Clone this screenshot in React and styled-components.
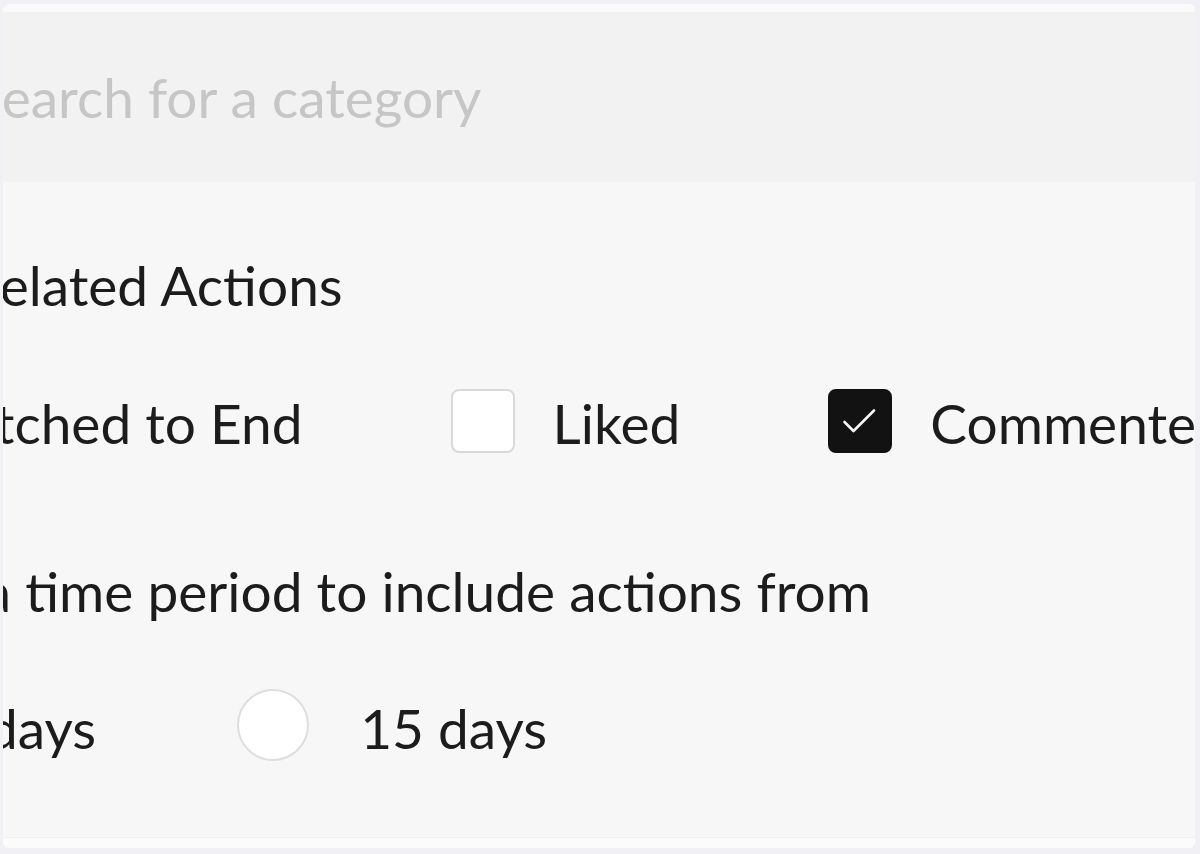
import React, { useState } from "react";
import styled, { createGlobalStyle } from "styled-components";

const GlobalStyle = createGlobalStyle`
  html, body {
    margin: 0;
    padding: 0;
    background: #f1f0f5;
    font-family: Lato, "Liberation Sans", sans-serif;
  }
`;

const App = () => {
    const [actions, setActions] = useState({ watched: false, liked: false, commented: true });
    const [period, setPeriod] = useState(null);

    const toggle = (key) => setActions((prev) => ({ ...prev, [key]: !prev[key] }));

    return (
        <>
            <GlobalStyle />
            <Frame>
                <Card>
                    <TopStrip />
                    <SearchBar>
                        <SearchInput placeholder="Search for a category" />
                    </SearchBar>
                    <Body>
                        <Heading>Related Actions</Heading>
                        <OptionRow shift={-191} gap={148}>
                            <Option>
                                <CheckBox checked={actions.watched} onClick={() => toggle("watched")}>
                                    {actions.watched && <CheckMark />}
                                </CheckBox>
                                <Label>Watched to End</Label>
                            </Option>
                            <Option>
                                <CheckBox checked={actions.liked} onClick={() => toggle("liked")}>
                                    {actions.liked && <CheckMark />}
                                </CheckBox>
                                <Label>Liked</Label>
                            </Option>
                            <Option>
                                <CheckBox checked={actions.commented} onClick={() => toggle("commented")}>
                                    {actions.commented && <CheckMark />}
                                </CheckBox>
                                <Label>Commented</Label>
                            </Option>
                        </OptionRow>
                        <Question>Select a time period to include actions from</Question>
                        <OptionRow shift={-185} gap={141} radio>
                            <Option radio>
                                <Radio selected={period === "7"} onClick={() => setPeriod("7")} />
                                <Label>7 days</Label>
                            </Option>
                            <Option radio>
                                <Radio selected={period === "15"} onClick={() => setPeriod("15")} />
                                <Label>15 days</Label>
                            </Option>
                        </OptionRow>
                    </Body>
                    <BottomStrip />
                </Card>
            </Frame>
        </>
    );
};

const CheckMark = () => (
    <svg width="40" height="40" viewBox="0 0 40 40" fill="none">
        <path d="M4.5 21 L13.5 30 L34 9.5" stroke="#f4f4f4" strokeWidth="2.6" strokeLinecap="round" strokeLinejoin="round" />
    </svg>
);

export default App;

const Frame = styled.div`
  height: 854px;
  box-sizing: border-box;
  padding: 4px 5px 6px 3px;
  overflow: hidden;
`;

const Card = styled.div`
  height: 100%;
  display: flex;
  flex-direction: column;
  background: #f7f7f7;
  border-radius: 6px;
  overflow: hidden;
`;

const TopStrip = styled.div`
  height: 8px;
  background: #fafafa;
`;

const SearchBar = styled.div`
  height: 170px;
  display: flex;
  align-items: center;
  background: #f2f2f2;
`;

const SearchInput = styled.input`
  margin-left: -31px;
  padding: 0;
  border: none;
  outline: none;
  background: transparent;
  font-family: Lato, "Liberation Sans", sans-serif;
  font-size: 55px;
  width: 900px;
  color: #1c1c1c;
  &::placeholder {
    color: #c6c6c6;
  }
`;

const Body = styled.div`
  flex: 1;
  display: flex;
  flex-direction: column;
  padding-top: 73px;
  color: #1c1c1c;
  font-size: 55px;
  line-height: 60px;
`;

const Heading = styled.div`
  margin-left: -36px;
  white-space: nowrap;
`;

const Question = styled.div`
  margin-left: -180px;
  margin-top: 108px;
  white-space: nowrap;
`;

const OptionRow = styled.div`
  display: flex;
  align-items: center;
  margin-left: ${(p) => p.shift}px;
  margin-top: ${(p) => (p.radio ? 68 : 73)}px;
  gap: ${(p) => p.gap}px;
  white-space: nowrap;
`;

const Option = styled.label`
  display: flex;
  align-items: center;
  gap: ${(p) => (p.radio ? 51 : 38)}px;
  cursor: pointer;
`;

const Label = styled.span`
  margin-top: 5px;
`;

const CheckBox = styled.span`
  width: 64px;
  height: 64px;
  box-sizing: border-box;
  flex-shrink: 0;
  border-radius: 8px;
  display: flex;
  align-items: center;
  justify-content: center;
  background: ${(p) => (p.checked ? "#121212" : "#ffffff")};
  border: 2px solid ${(p) => (p.checked ? "#121212" : "#d9d9d9")};
`;

const Radio = styled.span`
  width: 72px;
  height: 72px;
  box-sizing: border-box;
  flex-shrink: 0;
  border-radius: 50%;
  background: #ffffff;
  border: 2px solid ${(p) => (p.selected ? "#121212" : "#dedede")};
`;

const BottomStrip = styled.div`
  height: 10px;
  background: #fbfbfb;
  border-top: 1px solid #f0f0f0;
`;
